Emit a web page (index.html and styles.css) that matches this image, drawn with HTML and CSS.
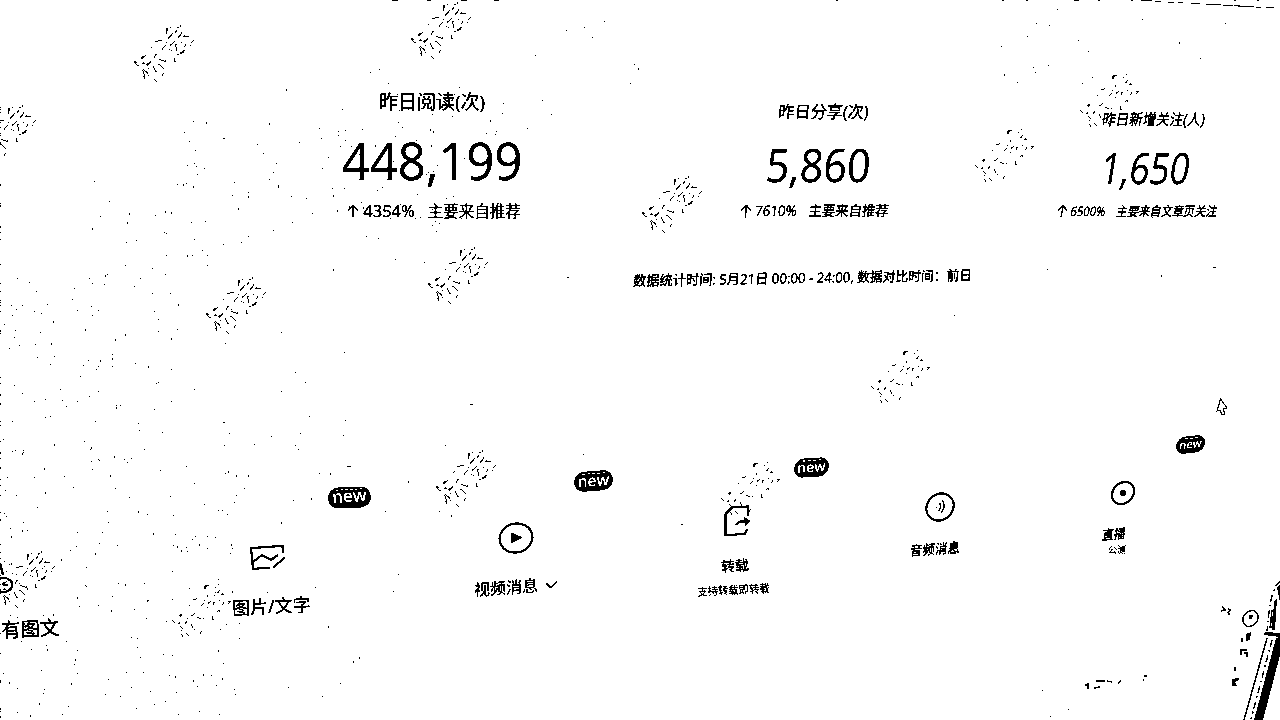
FILE: index.html
```html
<!DOCTYPE html>
<html lang="zh-CN">
<head>
<meta charset="utf-8">
<title>数据概览</title>
<link rel="stylesheet" href="styles.css">
</head>
<body>
<svg class="defs" width="0" height="0">
  <filter id="mono" x="0" y="0" width="100%" height="100%" color-interpolation-filters="sRGB">
    <feColorMatrix type="saturate" values="0"/>
    <feComponentTransfer>
      <feFuncR type="discrete" tableValues="0 1"/>
      <feFuncG type="discrete" tableValues="0 1"/>
      <feFuncB type="discrete" tableValues="0 1"/>
    </feComponentTransfer>
  </filter>
</svg>
<main class="stage">
  <section class="stats">
    <article class="stat stat-read">
      <h2>昨日阅读(次)</h2>
      <strong>448,199</strong>
      <p><svg class="up" viewBox="0 0 12 14"><path d="M6 13.500V1.500M1 6.500 6 1.500 11 6.500"/></svg><span>4354%</span><em>主要来自推荐</em></p>
    </article>
    <article class="stat stat-share">
      <h2>昨日分享(次)</h2>
      <strong>5,860</strong>
      <p><svg class="up" viewBox="0 0 12 14"><path d="M6 13.500V1.500M1 6.500 6 1.500 11 6.500"/></svg><span>7610%</span><em>主要来自推荐</em></p>
    </article>
    <article class="stat stat-follow">
      <h2>昨日新增关注(人)</h2>
      <strong>1,650</strong>
      <p><svg class="up" viewBox="0 0 12 14"><path d="M6 13.500V1.500M1 6.500 6 1.500 11 6.500"/></svg><span>6500%</span><em>主要来自文章页关注</em></p>
    </article>
  </section>
  <p class="note"><span>数据统计时间: 5月21日 00:00 - 24:00, </span><span class="note-end">数据对比时间：前日</span></p>
  <section class="actions">
    <div class="action a-existing">
      <svg width="16" height="36" viewBox="0 0 16 36"><path d="M0 3 3 15"/><ellipse cx="4" cy="25" rx="8.500" ry="7"/><path d="M4 22v3h4"/></svg>
      <b>有图文</b>
    </div>
    <div class="action a-image">
      <svg width="38" height="28" viewBox="0 0 38 28"><path d="M21 23.500 4 25 2 4 33.500 2 34.500 9M4 18l9-7 9 5 7-5M36 13 24 24"/></svg>
      <b>图片/文字</b>
      <i class="badge">new</i>
    </div>
    <div class="action a-video">
      <svg width="36" height="34" viewBox="0 0 36 34"><ellipse cx="18" cy="17" rx="16.500" ry="14.500" transform="rotate(-12 18 17)"/><path class="solid" d="M13.500 11.500v11L25 16.500z"/></svg>
      <b>视频消息<svg class="chev" viewBox="0 0 14 9"><path d="M1 2 6.500 7 13 1"/></svg></b>
      <i class="badge">new</i>
    </div>
    <div class="action a-repost">
      <svg width="30" height="34" viewBox="0 0 30 34"><path d="M26 12V2.500L10 3.500 3.500 10V31L23 30 25 25M14 21Q17 16 24 18"/><path class="solid" d="M22 13 29 17 23 22z"/></svg>
      <b>转载</b>
      <small>支持转载即转载</small>
      <i class="badge">new</i>
    </div>
    <div class="action a-audio">
      <svg width="30" height="30" viewBox="0 0 30 30"><ellipse cx="15" cy="15" rx="14.500" ry="12.800" transform="rotate(-45 15 15)"/><path class="thin" d="M14.500 11Q17 15 13.500 19M17.500 8.500Q21 15 16 21"/><circle class="solid" cx="11.500" cy="15.500" r="1"/></svg>
      <b>音频消息</b>
    </div>
    <div class="action a-live">
      <svg width="26" height="26" viewBox="0 0 26 26"><ellipse cx="13" cy="13" rx="12.200" ry="10" transform="rotate(-45 13 13)"/><ellipse class="solid" cx="13" cy="13" rx="2.800" ry="3.200"/></svg>
      <b>直播</b>
      <small>公测</small>
      <i class="badge">new</i>
    </div>
  </section>
  <svg class="overlay" viewBox="0 0 1280 720">
    <g id="marks" class="marks"></g>
    <path id="specks" class="specks"/>
    <g class="edge">
      <path d="M1141 .500h11M1155 1.500h6M1168 2.500h6M1178 2.500h5M1191 3.500h9M1206 4.500h15M1223 5.500h10M1234 5.500h6M1238 6.500h16M1256 7.500h5M1266 7.500h8M1002 .500h2M1026 .500h2M1074 .500h5M1098 .500h2M1131 .500h2M1234 .500h2M1257 .500h2M392 .500h6M427 .500h4M461 .500h6M494 .500h5"/>
    </g>
    <path class="cursor" d="M1220.500 399 1217 411l3-1 2 5 2.500-1-1-5 3.500-1z"/>
    <g class="pen">
      <path class="solid" d="M1265 632 1280 633V637L1264 635zM1276 638 1280 637V655L1263 720H1254zM1274 602 1277 598 1275 630H1272zM1277 588 1280 584V602z"/>
      <path d="M1267 638 1244 720M1272 610 1270 628"/>
      <path class="broken" d="M1280 581Q1272 588 1269 612L1267 631M1272 640 1251 719M1276 600 1271 630"/>
    </g>
    <g class="bits">
      <ellipse cx="1250.500" cy="618.500" rx="8.500" ry="7" transform="rotate(-50 1250.500 618.500)"/>
      <path class="solid" d="M1249 615h4l-1 4h-3zM1246 634l5-2-1 8-4 1zM1232 679l7-1v2l-4 2 2 4h-5z"/>
      <path d="M1242 638v4M1240 650h7M1241 651v4M1244 653h3v4M1235 667v4M1222 606l3 4M1221 611l5-1M1228 609l2 1-2 3 2 2M1085 685h4M1088 683v6M1094 688l6-1M1096 681h9M1107 681l5 1M1118 684l3-4M1144 676h3M1143 680h1"/>
    </g>
  </svg>
</main>
<script src="texture.js"></script>
</body>
</html>
```
FILE: styles.css
```css
* { box-sizing: border-box; }
body { margin: 0; background: #fff; color: #000; font-family: "Open Sans", "Noto Sans CJK SC", sans-serif; overflow: hidden; }
h2, p { margin: 0; font-weight: 400; }
em, i { font-style: normal; }
.defs { position: absolute; }
.stage { position: relative; width: 1280px; height: 720px; overflow: hidden; background: #fff; filter: url(#mono); }
svg { fill: none; stroke: #000; stroke-width: 2.200; flex: none; }
.solid { fill: #000; stroke: none; }
h2, .stat p, .note, .action b { -webkit-text-stroke: .350px #000; }

.stats { display: flex; align-items: flex-start; height: 240px; }
.stat { display: flex; flex-direction: column; align-items: center; white-space: nowrap; }
.stat strong { font-weight: 400; line-height: 60px; -webkit-text-stroke: .300px #000; }
.stat p { display: flex; align-items: center; line-height: 20px; }
.up { width: 12px; height: 14px; stroke-width: 1.700; margin-right: 4px; }
.stat em { margin-left: 13px; }
.stat-read { width: 264px; margin-left: 300px; padding-top: 89px; }
.stat-read h2 { font-size: 19px; line-height: 26px; }
.stat-read strong { font-size: 51px; margin-top: 15px; transform: scaleX(.96); }
.stat-read p { font-size: 15.500px; margin-top: 11px; transform: translateX(2px); }
.stat-read p span { font-size: 16.500px; }
.stat-share { width: 272px; margin-left: 118px; padding-top: 99px; }
.stat-share h2 { font-size: 17px; line-height: 26px; transform: translateX(6px) skewX(-5deg) scaleX(.95); }
.stat-share strong { font-size: 46px; margin-top: 9px; transform: translateX(1px) skewX(-5deg) scaleX(.89); }
.stat-share p { font-size: 14.500px; margin-top: 7px; transform: translateX(-3px) skewX(-6deg) scaleX(.92); }
.stat-follow { width: 260px; margin-left: 62px; padding-top: 106px; }
.stat-follow h2 { font-size: 15.500px; line-height: 26px; transform: translateX(8px) skewX(-10deg) scaleX(.87); }
.stat-follow strong { font-size: 43px; margin-top: 6px; transform: skewX(-9deg) scaleX(.81); }
.stat-follow p { font-size: 13px; margin-top: 3px; transform: translateX(-9px) skewX(-12deg) scaleX(.86); }

.note { width: 340px; height: 24px; margin: 26px 0 0 633px; font-size: 14px; line-height: 24px; white-space: pre; transform-origin: 0 50%; transform: translateY(3px) rotate(-1deg) skewX(-4deg) scaleX(.945); }
.note-end { font-size: 13.500px; }

.actions { display: flex; align-items: flex-start; margin-top: 180px; }
.action { position: relative; display: flex; flex-direction: column; align-items: center; width: 140px; white-space: nowrap; }
.action b { font-weight: 400; line-height: 20px; }
.action small { line-height: 14px; -webkit-text-stroke: .200px #000; }
.a-existing { width: 60px; align-items: flex-start; margin-top: 90px; }
.a-existing b { align-self: flex-end; margin-top: 23px; font-size: 19.500px; transform: rotate(-3deg); }
.a-image { margin: 74px 0 0 140px; }
.a-image > svg { margin-right: 4px; }
.a-image b { margin-top: 24px; font-size: 18px; transform: translateX(1px) rotate(-3deg); }
.a-video { margin: 51px 0 0 106px; }
.a-video b { display: flex; align-items: center; margin-top: 22px; font-size: 16px; transform: rotate(-4deg) skewX(-4deg); }
.chev { width: 13px; height: 9px; margin-left: 7px; }
.a-repost { margin: 34px 0 0 79px; }
.a-repost > svg { margin-left: 4px; }
.a-repost b { margin-top: 18px; font-size: 14px; transform: rotate(-4deg); }
.a-repost small { margin-top: 7px; font-size: 11px; transform: translateX(-2px) rotate(-3deg) scaleX(.94); }
.a-audio { margin: 22px 0 0 60px; }
.a-audio > svg { margin-left: 10px; }
.a-audio b { margin-top: 17px; font-size: 13.500px; transform: rotate(-4deg) skewX(-8deg) scaleX(.92); }
.a-live { margin: 10px 0 0 42px; }
.a-live > svg { margin-left: 11px; }
.a-live b { margin-top: 18px; font-size: 13px; transform: translateX(-3px) rotate(-4deg) skewX(-12deg) scaleX(.9); }
.a-live small { margin-top: -1px; font-size: 9px; }
.thin { stroke-width: 1.500; }

.badge { position: absolute; display: flex; justify-content: center; width: 43px; height: 21px; border-radius: 11px; background: #000; color: #fff; font: 600 17px/18px "Open Sans", sans-serif; transform: rotate(-3deg); }
.badge::before { content: ""; position: absolute; inset: 2px 8px auto; border-top: 1px dashed #fff; }
.a-image .badge { left: 128px; top: -57px; }
.a-video .badge { left: 128px; top: -50px; width: 39px; height: 20px; font-size: 15.500px; transform: rotate(-4deg) skewX(-5deg); }
.a-repost .badge { left: 129px; top: -46px; width: 35px; height: 19px; font-size: 14px; transform: rotate(-4deg) skewX(-7deg); }
.a-live .badge { left: 129px; top: -44px; width: 29px; height: 17px; font-size: 11px; line-height: 15px; transform: rotate(-5deg) skewX(-12deg); }

.overlay { position: absolute; left: 0; top: 0; width: 1280px; height: 720px; pointer-events: none; }
.marks text { font: 100 34px "Noto Sans CJK SC", sans-serif; text-anchor: middle; fill: none; stroke: #000; stroke-width: .900; stroke-dasharray: 7 9 1 11 4 8; }
.marks .faint { stroke-width: .850; stroke-dasharray: 4 12 1 11; }
.specks { stroke-width: 1; shape-rendering: crispEdges; }
.edge { stroke-width: 1; shape-rendering: crispEdges; }
.cursor { stroke-width: 1.200; }
.pen { stroke-width: 1.500; }
.broken { stroke-dasharray: 7 3 2 4; }
.bits { stroke-width: 1.500; }
```
FILE: texture.js
```js
// Tiled watermark: centre x, centre y, faint flag
const marks = [[163,53],[440,30],[5,133],[671,204],[1004,156,1],[1109,101,1],[457,275],[235,305],[900,377,1],[465,478],[750,489,1],[24,579],[201,611,1]];
const layer = document.getElementById('marks');
for (const [x, y, faint] of marks) {
  const t = document.createElementNS('http://www.w3.org/2000/svg', 'text');
  t.setAttribute('transform', `translate(${x} ${y}) rotate(-47)`);
  t.setAttribute('y', 13);
  if (faint) t.setAttribute('class', 'faint');
  t.textContent = '标途';
  layer.append(t);
}
// Paper grain: x, y, width, height, count
const areas = [[0,470,240,250,160],[0,270,180,200,100],[90,180,160,110,30],[180,120,260,150,70],[160,290,200,190,24],[330,85,200,140,50],[500,20,140,110,10],[240,480,160,220,14],[380,370,300,160,6],[560,200,640,130,4],[1000,5,230,80,18],[1040,690,30,30,3],[0,100,1,620,60],[200,10,250,80,4]];
let seed = 41;
const rnd = () => (seed = (seed * 16807) % 2147483647) / 2147483647;
let d = 'M836 .5h2M567 277h2M1213 267h3M328 626v2M278 185v3M470 404h3M347 466h4M223 422h2M681 524h2';
for (const [x, y, w, h, n] of areas) {
  for (let i = 0; i < n; i++) {
    const px = Math.floor(x + rnd() * w), py = Math.floor(y + rnd() * h);
    d += rnd() > .8 ? `M${px + .5} ${py}v2` : `M${px} ${py + .5}h1`;
  }
}
document.getElementById('specks').setAttribute('d', d);
```
